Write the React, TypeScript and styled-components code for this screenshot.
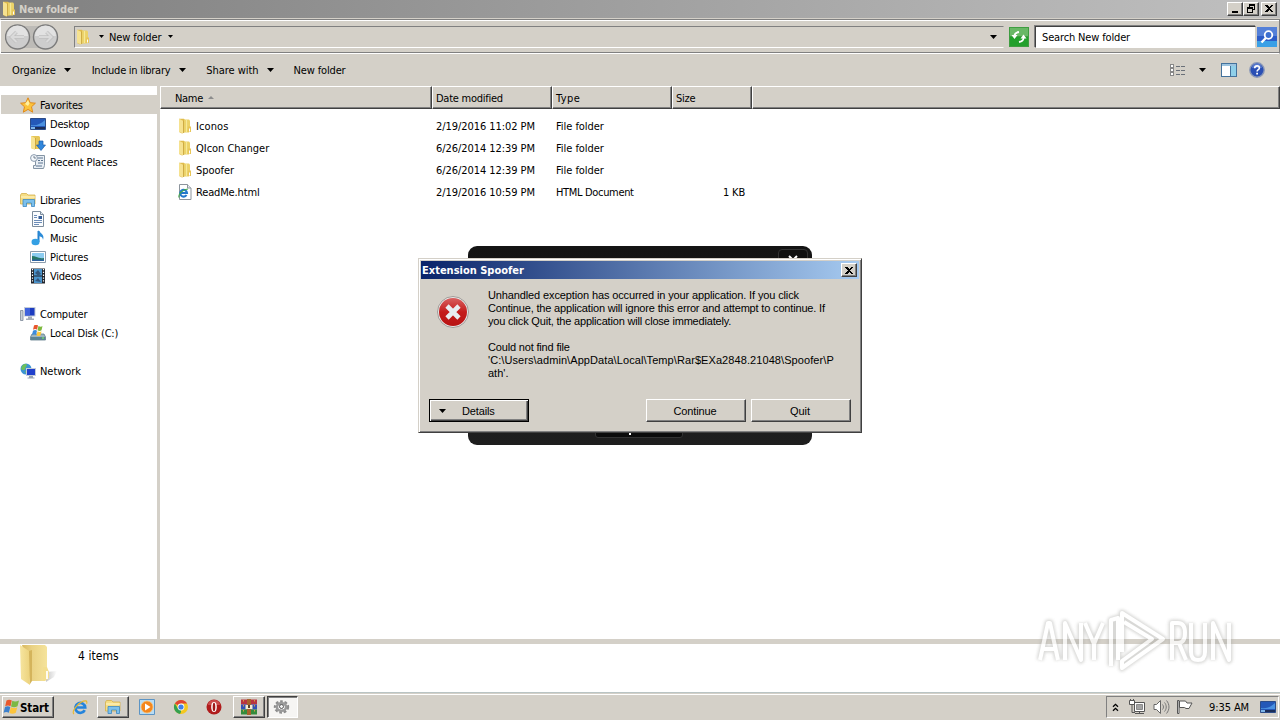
import React from 'react';
import styled, {createGlobalStyle, css} from 'styled-components';

const Global = createGlobalStyle`
  * { box-sizing: border-box; }
  body {
    margin: 0;
    overflow: hidden;
    background: #fff;
    color: #000;
    font-family: 'DejaVu Sans Condensed', 'DejaVu Sans', sans-serif;
    font-stretch: condensed;
    font-size: 11px;
    line-height: 14px;
  }
  svg { display: block; flex: none; }
`;

const Text = styled.span<{$ls?: number; $bold?: boolean; $color?: string; $size?: number}>`
  display: block;
  padding-top: 2px;
  white-space: nowrap;
  letter-spacing: ${p => p.$ls ?? -0.2}px;
  font-weight: ${p => (p.$bold ? 700 : 400)};
  color: ${p => p.$color ?? '#000'};
  font-size: ${p => p.$size ?? 11}px;
`;

const raised = css`
  border: 1px solid;
  border-color: #fff #404040 #404040 #fff;
  box-shadow: inset -1px -1px 0 #808080;
  background: #d4d0c8;
`;

const Desktop = styled.div`
  position: relative;
  width: 1280px;
  height: 720px;
  overflow: hidden;
  display: flex;
  flex-direction: column;
  background: #fff;
`;

const TitleBar = styled.div`
  height: 19px;
  padding: 0 3px 1px 1px;
  display: flex;
  align-items: center;
  gap: 2px;
  border-bottom: 1px solid #d4d0c8;
  background: linear-gradient(90deg, #808080, #c0c0c0);
`;

const WindowButtons = styled.div`
  margin-left: auto;
  display: flex;
`;

const WindowButton = styled.div<{$gap?: number}>`
  ${raised}
  width: 16px;
  height: 14px;
  margin-left: ${p => p.$gap ?? 0}px;
  display: flex;
  align-items: center;
  justify-content: center;
`;

const NavBar = styled.div`
  height: 35px;
  padding: 0 1px 0 4px;
  display: flex;
  align-items: center;
  background: #d4d0c8;
  border-top: 1px solid #808080;
  border-bottom: 1px solid #fff;
  border-left: 1px solid #fff;
  border-right: 1px solid #808080;
  box-shadow: inset 0 1px 0 #fff, inset 0 -1px 0 #808080;
`;

const AddressBox = styled.div`
  width: 930px;
  height: 22px;
  margin-left: 15px;
  padding: 0 6px 0 0;
  display: flex;
  align-items: center;
  border: 1px solid;
  border-color: #808080 #d4d0c8 #fff #808080;
`;

const Spacer = styled.div<{$w?: number}>`
  ${p => (p.$w ? `flex: none; width: ${p.$w}px;` : 'flex: 1;')}
`;

const SearchBox = styled.div`
  width: 221px;
  height: 22px;
  margin-left: 6px;
  padding-left: 6px;
  display: flex;
  align-items: center;
  background: #fff;
  border: 1px solid;
  border-color: #404040 #d4d0c8 #fff #404040;
  box-shadow: -1px -1px 0 #808080;
`;

const Toolbar = styled.div`
  height: 32px;
  padding: 0 15px 0 12px;
  display: flex;
  align-items: center;
  background: #d4d0c8;
`;

const Body = styled.div`
  height: 553px;
  display: flex;
`;

const Sidebar = styled.div`
  width: 160px;
  padding: 9px 0 0 1px;
  border-right: 3px solid #d4d0c8;
  background: #fff;
`;

const TreeItem = styled.div<{$child?: boolean; $active?: boolean; $space?: boolean}>`
  height: 19px;
  margin-top: ${p => (p.$space ? 19 : 0)}px;
  padding-left: ${p => (p.$child ? 29 : 19)}px;
  display: flex;
  align-items: center;
  gap: 4px;
  background: ${p => (p.$active ? '#d4d0c8' : 'transparent')};
`;

const List = styled.div`
  flex: 1;
`;

const HeaderRow = styled.div`
  height: 23px;
  display: grid;
  grid-template-columns: 272px 120px 120px 80px 1fr;
  background: #d4d0c8;
`;

const HeaderCell = styled.div<{$pad?: number}>`
  ${raised}
  padding-left: ${p => p.$pad ?? 3}px;
  display: flex;
  align-items: center;
  gap: 5px;
`;

const Rows = styled.div`
  padding-top: 6px;
`;

const Row = styled.div`
  height: 22px;
  display: grid;
  grid-template-columns: 276px 120px 120px 69px;
  align-items: center;
`;

const NameCell = styled.div`
  padding-left: 17px;
  display: flex;
  align-items: center;
  gap: 3px;
`;

const SizeCell = styled.div`
  text-align: right;
`;

const DetailsPane = styled.div`
  height: 53px;
  border-top: 5px solid #d4d0c8;
  padding: 0 0 0 18px;
  display: flex;
  gap: 20px;
  background: #fff;
`;

const ItemCount = styled.div`
  padding-top: 3px;
`;

const Taskbar = styled.div`
  height: 28px;
  padding: 3px 0 1px 2px;
  display: flex;
  align-items: flex-start;
  background: #d4d0c8;
  border-top: 1px solid #b9c4c4;
  box-shadow: inset 0 1px 0 #d4d0c8, inset 0 2px 0 #fff;
`;

const StartButton = styled.div`
  ${raised}
  width: 52px;
  height: 22px;
  display: flex;
  align-items: center;
  gap: 0;
`;

const TaskItem = styled.div<{$w: number; $kind?: 'raised' | 'pressed'}>`
  width: ${p => p.$w}px;
  height: 22px;
  display: flex;
  align-items: center;
  justify-content: center;
  ${p => p.$kind === 'raised' && raised}
  ${p =>
    p.$kind === 'pressed' &&
    css`
      background: #f6f5f3;
      border: 1px solid;
      border-color: #404040 #fff #fff #404040;
      box-shadow: inset 1px 1px 0 #808080;
    `}
`;

const Tray = styled.div`
  width: 173px;
  height: 22px;
  margin-left: auto;
  margin-right: 1px;
  padding: 0 2px 0 5px;
  display: flex;
  align-items: center;
  border: 1px solid;
  border-color: #808080 #fff #fff #808080;
`;

/* windows floating over the explorer */
const DarkWindow = styled.div`
  position: absolute;
  left: 468px;
  top: 246px;
  width: 344px;
  height: 199px;
  padding: 3px 4px 7px;
  display: flex;
  flex-direction: column;
  justify-content: space-between;
  border-radius: 9px;
  background: linear-gradient(#141414, #1e1e1e);
`;

const DarkClose = styled.div`
  width: 30px;
  height: 18px;
  align-self: flex-end;
  display: flex;
  justify-content: center;
  padding-top: 5px;
  border: 1px solid #333;
  border-radius: 4px;
  background: #101010;
`;

const DarkFoot = styled.div`
  width: 88px;
  height: 10px;
  margin-left: 123px;
  padding: 4px 0 0 33px;
  border: 1px solid #333;
  border-radius: 3px;
  background: #0b0b0b;
`;

const Dot = styled.div`
  width: 2px;
  height: 2px;
  background: #fff;
`;

const Dialog = styled.div`
  position: absolute;
  left: 418px;
  top: 258px;
  width: 444px;
  height: 175px;
  padding: 1px;
  background: #d4d0c8;
  border: 1px solid;
  border-color: #d4d0c8 #404040 #404040 #d4d0c8;
  box-shadow: inset 1px 1px 0 #fff, inset -1px -1px 0 #808080;
`;

const DialogTitle = styled.div`
  height: 18px;
  margin: 1px;
  padding: 0 2px 0 1px;
  display: flex;
  align-items: center;
  justify-content: space-between;
  background: linear-gradient(90deg, #0a246a, #a6caf0);
`;

const DialogBody = styled.div`
  height: 119px;
  padding: 9px 0 0 16px;
  display: flex;
  gap: 18px;
`;

const DialogIcon = styled.div`
  padding-top: 6px;
`;

const Message = styled.div`
  display: flex;
  flex-direction: column;
`;

const Line = styled.div<{$ls?: number}>`
  height: 13px;
  line-height: 13px;
  white-space: pre;
  font-family: 'Liberation Sans', sans-serif;
  font-size: 11px;
  letter-spacing: ${p => p.$ls ?? 0}px;
`;

const DialogButtons = styled.div`
  padding: 0 9px;
  display: flex;
`;

const Button = styled.div<{$default?: boolean; $ml?: number}>`
  ${raised}
  width: 100px;
  height: 23px;
  margin-left: ${p => p.$ml ?? 0}px;
  padding: 1px 2px 0 0;
  display: flex;
  align-items: center;
  justify-content: center;
  ${p =>
    p.$default &&
    css`
      border-color: #000;
      box-shadow: inset 1px 1px 0 #fff, inset -1px -1px 0 #404040, inset -2px -2px 0 #808080;
      justify-content: flex-start;
      padding-left: 9px;
      gap: 16px;
    `}
`;

const Watermark = styled.div`
  position: absolute;
  left: 1034px;
  top: 606px;
  display: flex;
  opacity: 0.75;
`;

const Halo = styled.g`
  filter: blur(1.5px);
`;

const Caret = ({w = 7}: {w?: number}) => (
  <svg width={w} height={w === 7 ? 4 : 3} viewBox="0 0 7 4" preserveAspectRatio="none">
    <path d="M0 0h7L3.500 4z" fill="#000" />
  </svg>
);

const FolderIcon = ({size = 16}: {size?: number}) => (
  <svg width={size} height={size} viewBox="0 0 16 16">
    <path d="M2 .8h5l1 1.200v12l-3 1.500-3-1.500z" fill="#e0bc4c" />
    <path d="M7 1.500h5l1 1v7l-1 5H6z" fill="#ecd268" />
    <path d="M2 .8l4 2v12.700l-4-1.700z" fill="#f6e290" />
    <path d="M6.500 2.500V15" stroke="#c8a440" strokeWidth=".8" />
    <path d="M9.500 2v12" stroke="#f6e898" strokeWidth="1.200" />
    <path d="M11 8.500h3v5.500h-3.500z" fill="#e8c658" />
    <path d="M12.500 10.500v3" stroke="#fff" />
  </svg>
);

const BigFolder = () => (
  <svg width="40" height="42" viewBox="0 0 40 42">
    <defs>
      <linearGradient id="bfA" x1="0" x2="1">
        <stop offset="0" stopColor="#f6e5a0" />
        <stop offset="1" stopColor="#ecd27c" />
      </linearGradient>
      <linearGradient id="bfB" x1="0" x2="1">
        <stop offset="0" stopColor="#d8b860" />
        <stop offset=".4" stopColor="#ead284" />
        <stop offset="1" stopColor="#f5e39b" />
      </linearGradient>
      <linearGradient id="bfS" x1="0" x2="1">
        <stop offset="0" stopColor="#c8c8c8" />
        <stop offset="1" stopColor="#fff" />
      </linearGradient>
    </defs>
    <path d="M28 28l11-1-3 6-8 5z" fill="url(#bfS)" />
    <path d="M4 1h23l2 2v32l-3 2H12z" fill="url(#bfB)" />
    <path d="M2 1l9 6 1 34-9-6z" fill="url(#bfA)" />
    <path d="M11 7l1 33 2-3V6z" fill="#d4b45c" />
    <path d="M25 23h4l2 5v6l-4 3h-2z" fill="#f3de8e" />
    <path d="M29 27v8" stroke="#fff" strokeWidth="1.800" />
  </svg>
);

const NavArrows = () => (
  <svg width="54" height="28" viewBox="0 0 54 28">
    <path d="M12 3h28v22H12z" fill="#bdbbb7" />
    {[12.5, 40.5].map((cx, i) => (
      <g key={cx} stroke="#7c7c7c" strokeWidth="1.400">
        <circle cx={cx} cy="14" r="12" fill="#cdcdcd" />
        <path d={`M${cx - 10.5} 13a10.500 10.500 0 0 1 21 0z`} fill="#e2e2e2" stroke="none" />
        <path
          d={i ? 'M34 14h12M41.500 9l5 5-5 5' : 'M19 14H7M11.500 9l-5 5 5 5'}
          fill="none"
          stroke="#c0c0c0"
          strokeWidth="3.600"
        />
        <path
          d={i ? 'M34 14h12M41.500 9l5 5-5 5' : 'M19 14H7M11.500 9l-5 5 5 5'}
          fill="none"
          stroke="#dadada"
          strokeWidth="2"
        />
      </g>
    ))}
  </svg>
);

const RefreshIcon = () => (
  <svg width="20" height="20" viewBox="0 0 20 20">
    <path d="M0 0h20v20H0z" fill="#3f9d41" />
    <path d="M1 1h18v8H1z" fill="#69b866" />
    <path d="M1 10h18v9H1z" fill="#23a02c" />
    <path d="M5.500 9c0-2.500 1.500-3.500 4.500-4M14.500 11c0 2.500-1.500 3.500-4.500 4" fill="none" stroke="#fff" strokeWidth="1.800" />
    <path d="M2.500 8h6l-3 4zM11.500 11.500h6l-3-4z" fill="#fff" />
  </svg>
);

const SearchIcon = () => (
  <svg width="20" height="20" viewBox="0 0 20 20">
    <path d="M0 0h20v20H0z" fill="#2c5cc8" />
    <path d="M0 0h20v9H0z" fill="#5480d8" />
    <path d="M0 14h20v6H0z" fill="#3aa0e6" />
    <circle cx="11.500" cy="8" r="3.800" fill="#3c6fd0" stroke="#fff" strokeWidth="1.800" />
    <path d="M8.800 11L4.500 15.500" stroke="#fff" strokeWidth="2.400" />
  </svg>
);

const ViewIcon = () => (
  <svg width="16" height="13" viewBox="0 0 16 13" shapeRendering="crispEdges">
    {[0, 4, 8].map(y => (
      <g key={y}>
        <path d={`M.5 ${y + 0.5}h3v3h-3z`} fill="#fff" stroke="#888" />
        <path d={`M6 ${y + 2.5}h4M11 ${y + 2.5}h4`} stroke="#6a7078" />
      </g>
    ))}
  </svg>
);

const PreviewIcon = () => (
  <svg width="16" height="14" viewBox="0 0 16 14" shapeRendering="crispEdges">
    <path d="M.5.5h15v13H.5z" fill="#fff" stroke="#44729c" />
    <path d="M1 1h14v2H1z" fill="#9cc4e0" />
    <path d="M10 3h5v10h-5z" fill="#8fd0ea" />
    <path d="M9.500 3v10" stroke="#44729c" />
  </svg>
);

const HelpIcon = () => (
  <svg width="16" height="16" viewBox="0 0 16 16">
    <circle cx="8" cy="8" r="7.200" fill="#2a4fb4" stroke="#8a98b8" strokeWidth="1.400" />
    <path d="M3 6a5 4.500 0 0 1 10 0z" fill="#5677cc" />
    <path d="M5.700 6.200c0-3.200 4.700-3 4.700-.2 0 1.700-2.300 1.700-2.300 3.500" fill="none" stroke="#fff" strokeWidth="1.600" />
    <path d="M7.200 10.800h1.800v1.700H7.200z" fill="#fff" />
  </svg>
);

const StarIcon = () => (
  <svg width="16" height="16" viewBox="0 0 16 16">
    <path
      d="M8 .8l2.200 4.900 5.200.5-3.900 3.600 1.200 5.400L8 12.400l-4.700 2.800 1.200-5.400L.6 6.200l5.200-.5z"
      fill="#fcc43c"
      stroke="#e08a1c"
    />
    <path d="M8 3l1.500 3.500L8 9 5 7z" fill="#fff0a0" />
  </svg>
);

const DesktopIcon = () => (
  <svg width="16" height="16" viewBox="0 0 16 16">
    <path d="M.5 2.500h15v11H.5z" fill="#2458b8" stroke="#2c4c88" />
    <path d="M1 9c5 1 10-1 14-5v6H1z" fill="#4a90e0" />
    <path d="M1 11h14v2H1z" fill="#1c2e58" />
    <path d="M1 11h4v2H1z" fill="#7cb4e8" />
  </svg>
);

const DownloadsIcon = () => (
  <svg width="16" height="16" viewBox="0 0 16 16">
    <path d="M1 1h8l1 1v12H3l-2-1z" fill="#e6c658" />
    <path d="M1 1l4 2v12l-4-2z" fill="#f8e494" />
    <path d="M5.500 3v11" stroke="#c49c34" strokeWidth=".7" />
    <path d="M9 6h4v4h2.500L11 15.500 6.500 10H9z" fill="#2f86dc" stroke="#1c5ca8" strokeWidth=".7" />
  </svg>
);

const RecentIcon = () => (
  <svg width="16" height="16" viewBox="0 0 16 16">
    <path d="M5.500 1.500h9v10l-1 3h-10v-3h2z" fill="#e8eef4" stroke="#8494a4" />
    <path d="M8 4h5M8 6.500h2M11 6.500h2M8 9h5M6 12h6" stroke="#5c7490" />
    <circle cx="4" cy="4" r="3.400" fill="#f4f8fc" stroke="#8a9aac" />
    <path d="M4 2v2h2" fill="none" stroke="#567" strokeWidth=".8" />
  </svg>
);

const LibrariesIcon = () => (
  <svg width="16" height="16" viewBox="0 0 16 16">
    <path d="M.5 3l1-1.500h5L8 3h7v9H.5z" fill="#f5dd84" stroke="#d4b04c" strokeWidth=".8" />
    <path d="M1 5h14" stroke="#fff6cc" />
    <path d="M3 7.500h11.500v7h-3V11h-5v3.500H3z" fill="#7cc0ec" stroke="#3c88c0" strokeWidth=".8" />
  </svg>
);

const DocumentIcon = () => (
  <svg width="16" height="16" viewBox="0 0 16 16">
    <path d="M2.500.5h8l3 3v12h-11z" fill="#fafcfe" stroke="#7c8c9c" />
    <path d="M10.500.5v3h3" fill="#dde6ee" stroke="#7c8c9c" />
    <path d="M4 4.500h3M4 6.500h3M4 9.500h8M4 11.500h8M4 13.500h5" stroke="#5c80b0" strokeWidth=".9" />
    <path d="M8.500 5h3.500v3H8.500z" fill="#345c98" />
  </svg>
);

const MusicIcon = () => (
  <svg width="16" height="16" viewBox="0 0 16 16">
    <path d="M8.500 1v11" stroke="#2480cc" strokeWidth="2" />
    <ellipse cx="5.500" cy="12" rx="4" ry="3.300" fill="#34a0e4" />
    <path d="M8.500 0c1 3 6.500 4 4.500 10C13 7 10.500 6.500 8.500 6z" fill="#2c8cd8" />
  </svg>
);

const PictureIcon = () => (
  <svg width="16" height="16" viewBox="0 0 16 16">
    <path d="M.5 2.500h15v11H.5z" fill="#fff" stroke="#8c9cac" />
    <path d="M2 4h12v8H2z" fill="#8cccf0" />
    <path d="M2 7c4 0 6 3 12 2v3H2z" fill="#267866" />
    <path d="M2 10.500h12V12H2z" fill="#2c62a0" />
  </svg>
);

const VideoIcon = () => (
  <svg width="16" height="16" viewBox="0 0 16 16">
    <path d="M1 .5h14v15H1z" fill="#20242c" />
    <path d="M4 1h8v6.500H4zM4 8.500h8V15H4z" fill="#4a94cc" />
    <path d="M5 5l3-3 3 4-3 1.500zM5 13l3-3 3 4z" fill="#35577c" />
    <path d="M2.500 1v14M13.500 1v14" stroke="#fff" strokeWidth="1.200" strokeDasharray="1.300 1.500" />
  </svg>
);

const ComputerIcon = () => (
  <svg width="16" height="16" viewBox="0 0 16 16">
    <path d="M.5 4.500h2.500v10H.5z" fill="#c8d0d8" stroke="#7c8898" strokeWidth=".8" />
    <path d="M4 1h11.500v9.500H4z" fill="#c4ccd8" />
    <path d="M5 2h9.500v7.500H5z" fill="#1c3cc0" />
    <path d="M5 2h5v7.500H5z" fill="#3f62dc" />
    <path d="M8 10.500h4v2H8zM6 12.500h8V14H6z" fill="#a4acb8" />
  </svg>
);

const DiskIcon = () => (
  <svg width="16" height="16" viewBox="0 0 16 16">
    <path d="M2 9h12l1.500 3v3H.5v-3z" fill="#9cb4c0" stroke="#607c8c" strokeWidth=".8" />
    <path d="M1 12h14v3H1z" fill="#5c8494" />
    <path d="M12 13h2" stroke="#7cfc5c" />
    <path d="M4 .5c1.500-1 3-1 4 0L7 4.800c-1-1-2.500-1-4 0z" fill="#e8562c" />
    <path d="M8.500 1c1.500 1 3 1 4 0l-1 4.300c-1.500 1-3 .5-4 0z" fill="#7cb83c" />
    <path d="M3 5.700c1.500-1 3-.8 4 0l-1 4.300c-1-1-2.500-1-4 0z" fill="#3c8cdc" />
    <path d="M7.500 6.200c1.500 1 3 1 4 0l-1 4.300c-1.500 1-3 .5-4 0z" fill="#fcc83c" />
  </svg>
);

const NetworkIcon = () => (
  <svg width="16" height="16" viewBox="0 0 16 16">
    <circle cx="6" cy="6" r="5.500" fill="#3c94d4" />
    <path d="M2 3c2-3 5-2 5-1S5 4 5 6 2 7 1 6zM5 8l3 1-2 2z" fill="#6cc05c" />
    <path d="M6 5h10v8H6z" fill="#c4ccd8" />
    <path d="M7 6h8v6H7z" fill="#2040cc" />
    <path d="M9 13h4v1.500H9zM7.500 14.500h7v1h-7z" fill="#98a4b4" />
  </svg>
);

const HtmlIcon = () => (
  <svg width="16" height="16" viewBox="0 0 16 16">
    <path d="M2.500.5h8l3.500 3.500v11.500H2.500z" fill="#fff" stroke="#8c949c" />
    <path d="M10.500.5v3.500H14" fill="#e8ecf0" stroke="#8c949c" />
    <path d="M9.500 11A3.400 3.400 0 1 1 10 9H3.500" fill="none" stroke="#2478cc" strokeWidth="2.100" />
    <path d="M2 13.500C1 10 6.500 5 11 5" fill="none" stroke="#44a84c" strokeWidth="1.100" />
  </svg>
);

const WinFlag = () => (
  <svg width="17" height="16" viewBox="0 0 16 16">
    <path d="M3 1.500c2-1.300 3.700-1 5.300 0L7 7.300c-1.600-1-3.300-1-5.300 0z" fill="#e8582c" />
    <path d="M8.800 1.800c2 1.200 4.200 1 6.700-.2L14 7.300c-2.200 1.200-4.300 1.200-6.500.2z" fill="#7cb844" />
    <path d="M1.500 8c2-1 3.600-.9 5.300 0l-1.400 5.700c-1.800-1-3.500-1-5.300 0z" fill="#3c80cc" />
    <path d="M7.300 8.300c2.200 1 4.300 1 6.500-.1l-1.500 5.500c-2.200 1.200-4.300 1.200-6.400.2z" fill="#fcc43c" />
  </svg>
);

const IeIcon = () => (
  <svg width="16" height="17" viewBox="0 0 17 17">
    <path d="M13.500 11.200A5.200 5.200 0 1 1 14 8.500H4" fill="none" stroke="#2484dc" strokeWidth="2.900" />
    <path d="M2 15.500C-1 12 8 1.500 14.500 1.500c1.500 0 1.500 1.500 1 3" fill="none" stroke="#e8b830" strokeWidth="1.200" />
  </svg>
);

const PlayerIcon = () => (
  <svg width="16" height="16" viewBox="0 0 16 16">
    <path d="M.5.5h15v15H.5z" fill="#b8dcf4" stroke="#5c94c4" />
    <circle cx="8" cy="8" r="6" fill="#f4861c" stroke="#fcc070" strokeWidth=".8" />
    <path d="M6 4.500l5.500 3.500L6 11.500z" fill="#fff" />
  </svg>
);

const ChromeIcon = () => (
  <svg width="16" height="16" viewBox="0 0 16 16">
    <circle cx="8" cy="8" r="7" fill="#f4c820" />
    <path d="M8 8L1.900 4.500A7 7 0 0 1 14.100 4.500H8z" fill="#e04434" />
    <path d="M8 8v7A7 7 0 0 1 1.900 4.500L5 9.700z" fill="#34a050" />
    <path d="M11 9.700L8 15a7 7 0 0 1-1-.1L9 11z" fill="#f4c820" />
    <circle cx="8" cy="8" r="3.400" fill="#fff" />
    <circle cx="8" cy="8" r="2.600" fill="#4080e8" />
  </svg>
);

const OperaIcon = () => (
  <svg width="16" height="16" viewBox="0 0 16 16">
    <circle cx="8" cy="8" r="7.500" fill="#b01c1c" />
    <path d="M2 6a6 5 0 0 1 12 0z" fill="#cc4c4c" />
    <ellipse cx="8" cy="8" rx="2.800" ry="5" fill="#fff" />
    <ellipse cx="8" cy="8" rx="1.300" ry="4.300" fill="#a01818" />
  </svg>
);

const RarIcon = () => (
  <svg width="16" height="16" viewBox="0 0 16 16">
    <path d="M0 .5h16v5H0z" fill="#b83440" />
    <path d="M0 5.500h16v5H0z" fill="#3450b4" />
    <path d="M0 10.500h16v5H0z" fill="#348c3c" />
    <path d="M6 0h4v16H6z" fill="#a8622c" />
    <path d="M4.500 6h7v4h-7z" fill="#f4ecd0" />
    <path d="M7 6h2v3H7z" fill="#54442c" />
    <path d="M2.500 1v14M13.500 1v14" stroke="#d4a040" strokeDasharray="1.500 3.500" />
  </svg>
);

const GearIcon = () => (
  <svg width="17" height="16" viewBox="0 0 17 16">
    <ellipse cx="8.500" cy="8" rx="6.400" ry="5.400" fill="none" stroke="#8c8c8c" strokeWidth="2.600" strokeDasharray="2.600 1.700" />
    <ellipse cx="8.500" cy="8" rx="4.600" ry="3.800" fill="#fff" stroke="#9a9a9a" strokeWidth="2.600" />
    <circle cx="8.500" cy="7.500" r="2" fill="#f4f4f4" stroke="#444" strokeWidth=".9" />
  </svg>
);

const ChevronsUp = () => (
  <svg width="7" height="9" viewBox="0 0 7 9">
    <path d="M1 3.800L3.500 1.300 6 3.800M1 7.800l2.500-2.500L6 7.800" fill="none" stroke="#000" strokeWidth="1.300" />
  </svg>
);

const TrayNetwork = () => (
  <svg width="16" height="16" viewBox="0 0 16 16">
    <path d="M5.500 3.500h10v9h-10z" fill="#fff" stroke="#555" />
    <path d="M7.500 5.500h6v5h-6z" fill="#a4a4a4" stroke="#8a8a8a" />
    <path d="M6 14.500h9M10.500 13v1" stroke="#555" />
    <path d="M.5 1.500h5v4h-5z" fill="#fff" stroke="#555" />
    <path d="M1.500 0v2M4.500 0v2M3 5.500v8h3" fill="none" stroke="#555" />
  </svg>
);

const TrayVolume = () => (
  <svg width="17" height="16" viewBox="0 0 17 16">
    <path d="M1 5.500h2.500l4-4v13l-4-4H1z" fill="#fff" stroke="#666" />
    <path d="M9.500 5.500c1.300 1.500 1.300 3.500 0 5M11.500 3.500c2.300 2.600 2.300 6.400 0 9M13.500 1.500c3.300 3.800 3.300 9.200 0 13" fill="none" stroke="#777" />
  </svg>
);

const TrayFlag = () => (
  <svg width="17" height="16" viewBox="0 0 17 16">
    <path d="M1.500 1.500h1.500v13H1.500z" fill="#fff" stroke="#555" />
    <path d="M3.500 2h6l1.500 2h5l-3 5.500h-3L8.500 8.500h-5z" fill="#fff" stroke="#555" />
  </svg>
);

const CloseX = () => (
  <svg width="8" height="7" viewBox="0 0 8 7" shapeRendering="crispEdges">
    <path d="M0 0h2l2 2 2-2h2L5 3.500 8 7H6L4 5 2 7H0l3-3.500z" fill="#000" />
  </svg>
);

const MinimizeGlyph = () => (
  <svg width="10" height="9" viewBox="0 0 10 9" shapeRendering="crispEdges">
    <path d="M2 7h6v2H2z" />
  </svg>
);

const RestoreGlyph = () => (
  <svg width="10" height="9" viewBox="0 0 10 9" shapeRendering="crispEdges">
    <path d="M3 0h6v6H7V5h1V2H4v1H3zM1 3h6v6H1zM2 5v3h4V5z" fillRule="evenodd" />
  </svg>
);

const ErrorIcon = () => (
  <svg width="34" height="34" viewBox="0 0 34 34">
    <defs>
      <linearGradient id="err" x1="0" x2="0" y1="0" y2="1">
        <stop offset="0" stopColor="#d86060" />
        <stop offset=".5" stopColor="#c41c1c" />
        <stop offset="1" stopColor="#b81414" />
      </linearGradient>
    </defs>
    <circle cx="17" cy="17" r="15.500" fill="#e8e8e8" stroke="#a09c98" />
    <circle cx="17" cy="17" r="14" fill="url(#err)" />
    <path d="M11 11l12 12M23 11L11 23" stroke="#e8eef2" strokeWidth="4.600" />
  </svg>
);

const WatermarkShapes = () => (
  <>
    <path d="M6 54L14 17h2l8 37M10 43h11" />
    <path d="M31 54V17l16 37V17" />
    <path d="M51 17l9 21v16M69 17l-9 21" />
    <path d="M77 60V14l7-2v42M88 46V7l41 26-41 29v-7l30-22-28-17" />
    <path d="M138 54V17h6q7 0 7 10t-7 10h-6M145 37l7 17" />
    <path d="M157 17v29q0 8 7 8t7-8V17" />
    <path d="M179 54V17l16 37V17" />
  </>
);

const WatermarkLogo = () => (
  <svg width="204" height="72" viewBox="0 0 204 72" fill="none" strokeLinejoin="round">
    <Halo stroke="#aaaaa6" strokeWidth="7" opacity=".6">
      <WatermarkShapes />
    </Halo>
    <g stroke="#fff" strokeWidth="4">
      <WatermarkShapes />
    </g>
  </svg>
);

const tree = [
  {icon: <StarIcon />, name: 'Favorites', active: true},
  {icon: <DesktopIcon />, name: 'Desktop', child: true},
  {icon: <DownloadsIcon />, name: 'Downloads', child: true},
  {icon: <RecentIcon />, name: 'Recent Places', child: true, ls: -0.1},
  {icon: <LibrariesIcon />, name: 'Libraries', space: true, ls: -0.25},
  {icon: <DocumentIcon />, name: 'Documents', child: true, ls: -0.25},
  {icon: <MusicIcon />, name: 'Music', child: true},
  {icon: <PictureIcon />, name: 'Pictures', child: true, ls: -0.1},
  {icon: <VideoIcon />, name: 'Videos', child: true, ls: -0.25},
  {icon: <ComputerIcon />, name: 'Computer', space: true, ls: -0.25},
  {icon: <DiskIcon />, name: 'Local Disk (C:)', child: true},
  {icon: <NetworkIcon />, name: 'Network', space: true, ls: -0.05},
];

const files = [
  {icon: <FolderIcon />, name: 'Iconos', ls: 0.1, date: '2/19/2016 11:02 PM', type: 'File folder', typeLs: -0.05, size: ''},
  {icon: <FolderIcon />, name: 'QIcon Changer', ls: -0.03, date: '6/26/2014 12:39 PM', type: 'File folder', typeLs: -0.05, size: ''},
  {icon: <FolderIcon />, name: 'Spoofer', ls: -0.03, date: '6/26/2014 12:39 PM', type: 'File folder', typeLs: -0.05, size: ''},
  {icon: <HtmlIcon />, name: 'ReadMe.html', ls: -0.15, date: '2/19/2016 10:59 PM', type: 'HTML Document', typeLs: -0.33, size: '1 KB'},
];

const message = [
  {text: 'Unhandled exception has occurred in your application. If you click', ls: -0.125},
  {text: 'Continue, the application will ignore this error and attempt to continue. If', ls: -0.17},
  {text: 'you click Quit, the application will close immediately.', ls: -0.19},
  {text: ' ', ls: 0},
  {text: 'Could not find file', ls: -0.17},
  {text: "'C:\\Users\\admin\\AppData\\Local\\Temp\\Rar$EXa2848.21048\\Spoofer\\P", ls: 0.08},
  {text: "ath'.", ls: 0},
];

const App: React.FC = () => {
  return (
    <Desktop>
      <Global />
      <TitleBar>
        <FolderIcon />
        <Text $bold $color="#d4d0c8" $ls={-0.15}>New folder</Text>
        <WindowButtons>
          <WindowButton><MinimizeGlyph /></WindowButton>
          <WindowButton><RestoreGlyph /></WindowButton>
          <WindowButton $gap={2}><CloseX /></WindowButton>
        </WindowButtons>
      </TitleBar>
      <NavBar>
        <NavArrows />
        <AddressBox>
          <FolderIcon />
          <Spacer $w={8} />
          <Caret w={5} />
          <Spacer $w={5} />
          <Text $ls={-0.1}>New folder</Text>
          <Spacer $w={7} />
          <Caret w={5} />
          <Spacer />
          <Caret />
        </AddressBox>
        <Spacer $w={5} />
        <RefreshIcon />
        <SearchBox>
          <Text $ls={-0.15}>Search New folder</Text>
        </SearchBox>
        <Spacer $w={1} />
        <SearchIcon />
      </NavBar>
      <Toolbar>
        <Text $ls={-0.08}>Organize</Text>
        <Spacer $w={8} />
        <Caret />
        <Spacer $w={21} />
        <Text $ls={-0.25}>Include in library</Text>
        <Spacer $w={9} />
        <Caret />
        <Spacer $w={20} />
        <Text $ls={-0.05}>Share with</Text>
        <Spacer $w={8} />
        <Caret />
        <Spacer $w={20} />
        <Text $ls={-0.15}>New folder</Text>
        <Spacer />
        <ViewIcon />
        <Spacer $w={13} />
        <Caret />
        <Spacer $w={15} />
        <PreviewIcon />
        <Spacer $w={12} />
        <HelpIcon />
      </Toolbar>
      <Body>
        <Sidebar>
          {tree.map(t => (
            <TreeItem key={t.name} $child={t.child} $active={t.active} $space={t.space}>
              {t.icon}
              <Text $ls={t.ls}>{t.name}</Text>
            </TreeItem>
          ))}
        </Sidebar>
        <List>
          <HeaderRow>
            <HeaderCell $pad={14}>
              <Text $ls={-0.3}>Name</Text>
              <svg width="6" height="3" viewBox="0 0 6 3"><path d="M0 3h6L3 0z" fill="#8c8c8c" /></svg>
            </HeaderCell>
            <HeaderCell><Text $ls={-0.25}>Date modified</Text></HeaderCell>
            <HeaderCell><Text $ls={0.4}>Type</Text></HeaderCell>
            <HeaderCell><Text $ls={-0.25}>Size</Text></HeaderCell>
            <HeaderCell />
          </HeaderRow>
          <Rows>
            {files.map(f => (
              <Row key={f.name}>
                <NameCell>
                  {f.icon}
                  <Text $ls={f.ls}>{f.name}</Text>
                </NameCell>
                <Text $ls={-0.06}>{f.date}</Text>
                <Text $ls={f.typeLs}>{f.type}</Text>
                <SizeCell><Text>{f.size}</Text></SizeCell>
              </Row>
            ))}
          </Rows>
        </List>
      </Body>
      <DetailsPane>
        <BigFolder />
        <ItemCount><Text $size={12} $ls={0.05}>4 items</Text></ItemCount>
      </DetailsPane>
      <Taskbar>
        <StartButton>
          <WinFlag />
          <Text $bold $size={11.5} $ls={-0.1}>Start</Text>
        </StartButton>
        <Spacer $w={9} />
        <TaskItem $w={34}><IeIcon /></TaskItem>
        <TaskItem $w={32} $kind="raised"><LibrariesIcon /></TaskItem>
        <TaskItem $w={35}><PlayerIcon /></TaskItem>
        <TaskItem $w={33}><ChromeIcon /></TaskItem>
        <TaskItem $w={34}><OperaIcon /></TaskItem>
        <Spacer $w={2} />
        <TaskItem $w={32} $kind="raised"><RarIcon /></TaskItem>
        <Spacer $w={2} />
        <TaskItem $w={31} $kind="pressed">
          <GearIcon />
          <Spacer $w={2} />
        </TaskItem>
        <Tray>
          <ChevronsUp />
          <Spacer $w={10} />
          <TrayNetwork />
          <Spacer $w={8} />
          <TrayVolume />
          <Spacer $w={6} />
          <TrayFlag />
          <Spacer />
          <Text $ls={-0.1}>9:35 AM</Text>
          <Spacer $w={11} />
          <DesktopIcon />
        </Tray>
      </Taskbar>

      <DarkWindow>
        <DarkClose>
          <svg width="10" height="10" viewBox="0 0 10 10"><path d="M1 1l8 8M9 1L1 9" stroke="#fff" strokeWidth="2" /></svg>
        </DarkClose>
        <DarkFoot><Dot /></DarkFoot>
      </DarkWindow>

      <Dialog>
        <DialogTitle>
          <Text $bold $color="#fff" $ls={0}>Extension Spoofer</Text>
          <WindowButton><CloseX /></WindowButton>
        </DialogTitle>
        <DialogBody>
          <DialogIcon><ErrorIcon /></DialogIcon>
          <Message>
            {message.map((m, i) => (
              <Line key={i} $ls={m.ls}>{m.text}</Line>
            ))}
          </Message>
        </DialogBody>
        <DialogButtons>
          <Button $default>
            <Caret />
            <Line $ls={-0.15}>Details</Line>
          </Button>
          <Button $ml={117}><Line $ls={-0.15}>Continue</Line></Button>
          <Button $ml={5}><Line>Quit</Line></Button>
        </DialogButtons>
      </Dialog>

      <Watermark><WatermarkLogo /></Watermark>
    </Desktop>
  );
};

export default App;
